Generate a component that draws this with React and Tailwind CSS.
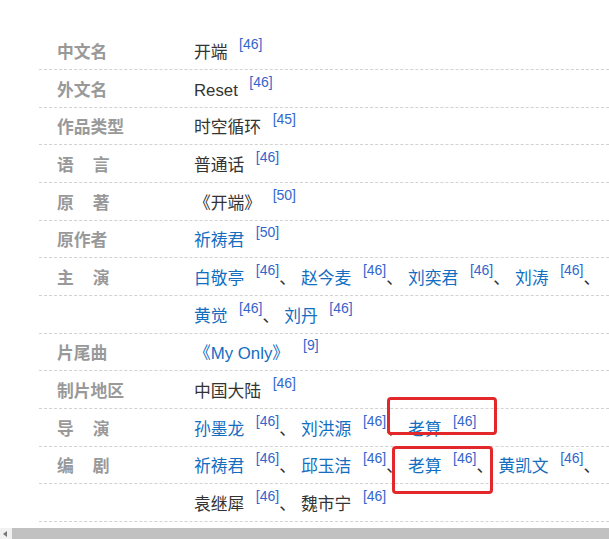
const rows = [
  { label: ["中文名"], items: [{ t: "开端", sup: "46" }] },
  { label: ["外文名"], items: [{ t: "Reset", sup: "46" }] },
  { label: ["作品类型"], items: [{ t: "时空循环", sup: "45" }] },
  { label: ["语", "言"], items: [{ t: "普通话", sup: "46" }] },
  { label: ["原", "著"], items: [{ t: "《开端》", sup: "50" }] },
  { label: ["原作者"], items: [{ t: "祈祷君", link: true, sup: "50" }] },
  {
    label: ["主", "演"],
    items: [
      { t: "白敬亭", link: true, sup: "46", sep: true },
      { t: "赵今麦", link: true, sup: "46", sep: true },
      { t: "刘奕君", link: true, sup: "46", sep: true },
      { t: "刘涛", link: true, sup: "46", sep: true },
    ],
  },
  {
    label: [],
    items: [
      { t: "黄觉", link: true, sup: "46", sep: true },
      { t: "刘丹", link: true, sup: "46" },
    ],
  },
  { label: ["片尾曲"], items: [{ t: "《My Only》", link: true, sup: "9", wide: true }] },
  { label: ["制片地区"], items: [{ t: "中国大陆", sup: "46" }] },
  {
    label: ["导", "演"],
    items: [
      { t: "孙墨龙", link: true, sup: "46", sep: true },
      { t: "刘洪源", link: true, sup: "46", sep: true },
      { t: "老算", link: true, sup: "46" },
    ],
  },
  {
    label: ["编", "剧"],
    items: [
      { t: "祈祷君", link: true, sup: "46", sep: true },
      { t: "邱玉洁", link: true, sup: "46", sep: true },
      { t: "老算", link: true, sup: "46", sep: true },
      { t: "黄凯文", link: true, sup: "46", sep: true },
    ],
  },
  {
    label: [],
    items: [
      { t: "袁继犀", sup: "46", sep: true },
      { t: "魏市宁", sup: "46" },
    ],
  },
];

function Item({ item, first }) {
  return (
    <span className={first ? "" : "ml-[5px]"}>
      <span className={item.link ? "text-[#136ec2]" : "text-[#333]"}>{item.t}</span>
      <span
        className={
          "relative -top-[9px] text-[14px] text-[#3366cc] " +
          (item.wide ? "ml-[14px]" : "ml-[11.5px]")
        }
      >
        [{item.sup}]
      </span>
      {item.sep && <span className="text-[#333]">、</span>}
    </span>
  );
}

function Row({ row }) {
  return (
    <div className="flex items-center h-[37.67px] pt-[5px] ml-[39px] border-b border-dashed border-[#d2d2d2]">
      <div className="w-[155px] shrink-0 pl-[18px] flex font-bold text-[#999]">
        {row.label.map((c, i) => (
          <span key={i} className={i > 0 ? "ml-[19px]" : ""}>
            {c}
          </span>
        ))}
      </div>
      <div className="whitespace-nowrap">
        {row.items.map((it, i) => (
          <Item key={i} item={it} first={i === 0} />
        ))}
      </div>
    </div>
  );
}

export default function App() {
  return (
    <div
      className="w-[609px] h-[539px] flex flex-col bg-white text-[16.8px] leading-[26px] overflow-hidden"
      style={{ fontFamily: '"Liberation Sans", Arial, "Noto Sans CJK SC", sans-serif' }}
    >
      <div className="relative h-[528px] pt-[32.33px] overflow-hidden">
        {rows.map((r, i) => (
          <Row key={i} row={r} />
        ))}
        <div className="absolute left-[387px] top-[397px] w-[110px] h-[38px] border-[3px] border-[#e3282b] rounded-[4px]" />
        <div className="absolute left-[392px] top-[446px] w-[101px] h-[48px] border-[3px] border-[#e3282b] rounded-[4px]" />
      </div>
      <div className="h-[11px] flex bg-[#f1f1f1]">
        <div className="w-[12px] flex items-center pl-[3px]">
          <div className="w-0 h-0 border-y-[3px] border-y-transparent border-r-[4px] border-r-[#777]" />
        </div>
        <div className="flex-1 bg-[#c1c1c1]" />
      </div>
    </div>
  );
}
